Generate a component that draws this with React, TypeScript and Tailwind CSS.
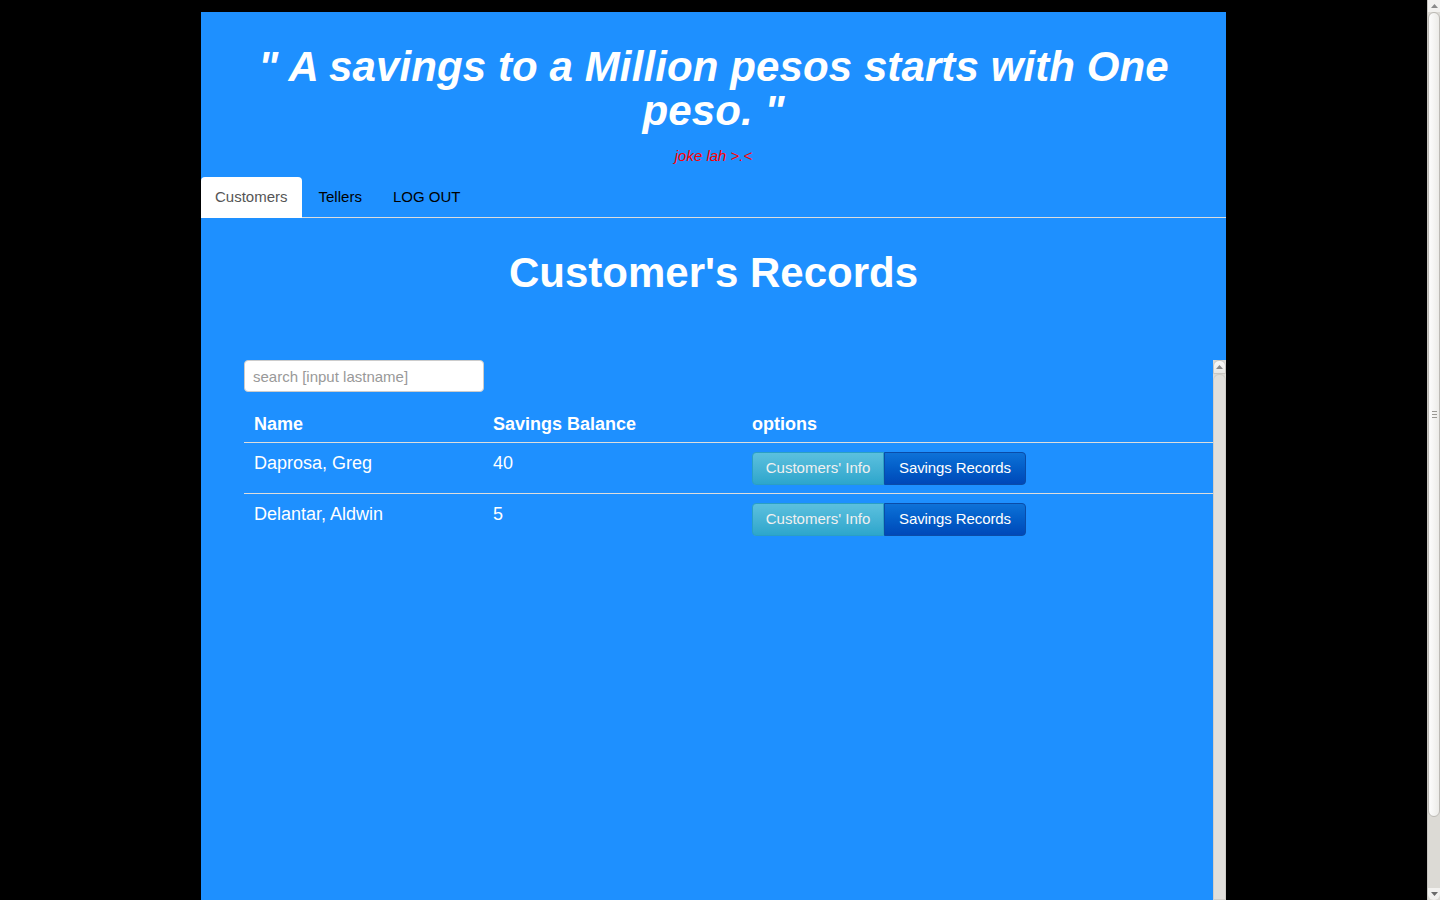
import React from "react";

const rows = [
  { name: "Daprosa, Greg", balance: "40" },
  { name: "Delantar, Aldwin", balance: "5" },
];

function ArrowUp() {
  return (
    <svg width="7" height="4" viewBox="0 0 7 4">
      <path d="M0 4 L3.5 0 L7 4 Z" fill="#8a8a8a" />
    </svg>
  );
}
function ArrowDown() {
  return (
    <svg width="7" height="4" viewBox="0 0 7 4">
      <path d="M0 0 L3.5 4 L7 0 Z" fill="#6a6a6a" />
    </svg>
  );
}

export default function App() {
  return (
    <div
      className="flex h-[900px] w-[1440px] overflow-hidden bg-black"
      style={{ fontFamily: '"Liberation Sans", Arial, sans-serif' }}
    >
      <div className="flex w-[1427px] justify-center pt-[12px]">
        <div className="flex w-[1025px] flex-col bg-[#1e90ff]">
          <div className="px-[15px] pt-[33px] text-center">
            <h1 className="text-[42px] font-bold italic leading-[44px] tracking-[0.1px] text-white">
              " A savings to a Million pesos starts with One peso. "
            </h1>
            <p className="mt-[13px] text-[15px] italic leading-[20px] text-[#ff0000]">
              joke lah &gt;.&lt;
            </p>
          </div>
          <div className="mt-[11px] flex h-[41px] items-end border-b border-[#dddddd]">
            <div className="-mb-px flex h-[41px] items-center rounded-t-[4px] bg-white px-[14px] text-[15px] text-[#555555]">
              Customers
            </div>
            <div className="ml-[2px] flex h-[40px] items-center pl-[15px] pr-[14px] text-[15px] text-black">
              Tellers
            </div>
            <div className="ml-[2px] flex h-[40px] items-center px-[15px] text-[15px] text-black">
              LOG OUT
            </div>
          </div>
          <h2 className="mt-[32px] text-center text-[42px] font-bold leading-[46px] text-white">
            Customer's Records
          </h2>
          <div className="mt-[64px] ml-[43px] flex flex-1">
            <div className="flex-1">
              <input
                type="text"
                placeholder="search [input lastname]"
                className="h-[32px] w-[240px] rounded-[4px] border border-[#cccccc] bg-white px-[8px] text-[15px] text-[#555] placeholder:text-[#999999] outline-none"
              />
              <table className="mt-[10px] w-full border-collapse text-[18px] text-white">
                <thead>
                  <tr className="border-b border-[#dddddd]">
                    <th className="w-[239px] px-[10px] pt-[10px] pb-[6px] text-left font-bold leading-[24px]">Name</th>
                    <th className="w-[259px] px-[10px] pt-[10px] pb-[6px] text-left font-bold leading-[24px]">
                      Savings Balance
                    </th>
                    <th className="px-[10px] pt-[10px] pb-[6px] text-left font-bold leading-[24px]">options</th>
                  </tr>
                </thead>
                <tbody>
                  {rows.map((r, i) => (
                    <tr key={r.name} className={i === 0 ? "border-b border-[#dddddd]" : ""}>
                      <td className="px-[10px] pt-[9px] pb-[8px] align-top leading-[22px]">{r.name}</td>
                      <td className="px-[10px] pt-[9px] pb-[8px] align-top leading-[22px]">{r.balance}</td>
                      <td className="px-[10px] pt-[9px] pb-[8px] align-top">
                        <div className="flex">
                          <button className="h-[33px] w-[132px] rounded-l-[4px] border border-[#2b9fc4] bg-gradient-to-b from-[#5bc0de] to-[#2ca6cc] text-[15px] text-[#f0f0f0]">
                            Customers' Info
                          </button>
                          <button className="h-[33px] w-[142px] rounded-r-[4px] border border-[#0a4ca8] bg-gradient-to-b from-[#0e72d8] to-[#0048b8] text-[15px] tracking-[-0.1px] text-white">
                            Savings Records
                          </button>
                        </div>
                      </td>
                    </tr>
                  ))}
                </tbody>
              </table>
            </div>
            <div className="flex w-[13px] flex-col bg-[#dcdad5]">
              <div className="flex h-[14px] items-center justify-center rounded-t-[6px] border border-[#c9c7c2] bg-gradient-to-b from-[#fbfbfa] to-[#e8e7e4]">
                <ArrowUp />
              </div>
              <div className="flex-1 rounded-t-[6px] border border-[#cfcdc8] bg-[#e1dfdb]" />
            </div>
          </div>
        </div>
      </div>
      <div className="flex w-[13px] flex-col border-l border-[#c9c7c2] bg-[#dcdad5]">
        <div className="flex h-[12px] items-center justify-center bg-[#f2f1ef]">
          <ArrowUp />
        </div>
        <div className="flex h-[805px] flex-col items-center justify-center gap-[2px] rounded-[6px] border border-[#bcbab5] bg-gradient-to-r from-[#fdfdfd] to-[#ecebe8]">
          <div className="h-px w-[5px] bg-[#9a9893]" />
          <div className="h-px w-[5px] bg-[#9a9893]" />
          <div className="h-px w-[5px] bg-[#9a9893]" />
        </div>
        <div className="flex-1" />
        <div className="flex h-[12px] items-center justify-center rounded-b-[6px] bg-[#f2f1ef]">
          <ArrowDown />
        </div>
      </div>
    </div>
  );
}
